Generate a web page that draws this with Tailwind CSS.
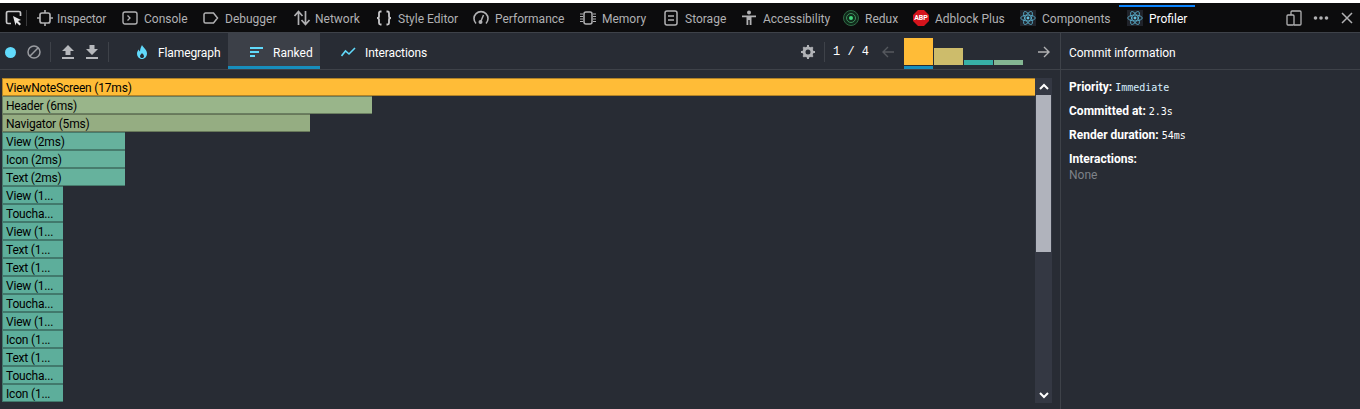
<!doctype html>
<html><head><meta charset="utf-8"><script src="https://cdn.jsdelivr.net/npm/@tailwindcss/browser@4"></script></head>
<body class="m-0 h-[409px] w-[1360px] overflow-hidden bg-[#282c34] font-['Roboto','Open_Sans',sans-serif] text-[12px]">
<div class="h-[3px] bg-white"></div>
<!-- devtools tabs -->
<div class="flex h-[29px] items-center bg-[#0c0c0d] pt-[1px] text-[12px] text-[#b1b1b3] [&>div>span:last-child]:mt-[2px]">
  <div class="flex w-[26px] justify-center pl-[2px]">
    <svg width="18" height="16" viewBox="0 0 18 16" fill="none"><path d="M6 13.500H3a1.500 1.500 0 0 1-1.500-1.500V3A1.500 1.500 0 0 1 3 1.500h11A1.500 1.500 0 0 1 15.500 3v3" stroke="#c8c8ca" stroke-width="1.700"/><path d="M8 6l8 4-3 1 3 3-1.500 1.500-3-3-1 3z" fill="#e4e4e6"/></svg>
  </div>
  <div class="h-[16px] w-px bg-[#3a3a3c]"></div>
  <div class="ml-[10px] flex w-[85px] items-center gap-[4px]"><svg width="16" height="16" viewBox="0 0 16 16" fill="none"><rect x="3" y="3" width="10" height="10" rx="2" stroke="#b1b1b3" stroke-width="1.700"/><path d="M8 0v3M8 13v3M0 8h3M13 8h3" stroke="#b1b1b3" stroke-width="1.600"/></svg><span class="tracking-[-0.1px]">Inspector</span></div>
  <div class="flex w-[81px] items-center gap-[6px]"><svg width="16" height="16" viewBox="0 0 16 16" fill="none"><rect x="1" y="2" width="14" height="12" rx="2" stroke="#b1b1b3" stroke-width="1.400"/><path d="M5.500 5.500L8 8l-2.500 2.500" stroke="#b1b1b3" stroke-width="1.300"/></svg><span>Console</span></div>
  <div class="flex w-[90px] items-center gap-[6px]"><svg width="16" height="16" viewBox="0 0 16 16" fill="none"><path d="M2.500 3h8l4 5-4 5h-8A1.500 1.500 0 0 1 1 11.500v-7A1.500 1.500 0 0 1 2.500 3z" stroke="#b1b1b3" stroke-width="1.500"/></svg><span>Debugger</span></div>
  <div class="flex w-[83px] items-center gap-[4px]"><svg width="18" height="16" viewBox="0 0 18 16" fill="none"><path d="M5.500 15V2M1.500 6l4-4.500 4 4.500M12.500 1v13M8.500 10l4 4.500 4-4.500" stroke="#b1b1b3" stroke-width="1.700"/></svg><span>Network</span></div>
  <div class="flex w-[97px] items-center gap-[6px]"><svg width="16" height="16" viewBox="0 0 16 16" fill="none" stroke="#c8c8ca" stroke-width="1.800"><path d="M5.500 1.500H4.500A1.500 1.500 0 0 0 3 3v3.200C3 7.200 2.300 8 1 8c1.300 0 2 .8 2 1.800V13a1.500 1.500 0 0 0 1.500 1.500h1M10.500 1.500h1A1.500 1.500 0 0 1 13 3v3.200c0 1 .7 1.800 2 1.800-1.300 0-2 .8-2 1.800V13a1.500 1.500 0 0 1-1.500 1.500h-1"/></svg><span>Style Editor</span></div>
  <div class="flex w-[106px] items-center gap-[6px]"><svg width="16" height="16" viewBox="0 0 16 16" fill="none"><path d="M3 13.500A7 7 0 1 1 13 13.500" stroke="#b1b1b3" stroke-width="1.600"/><path d="M10.500 5L8 11" stroke="#b1b1b3" stroke-width="1.500"/><circle cx="7.500" cy="12" r="2" fill="#b1b1b3"/></svg><span>Performance</span></div>
  <div class="flex w-[84px] items-center gap-[5px]"><svg width="18" height="16" viewBox="0 0 18 16" fill="none"><rect x="5" y="2" width="8" height="12" rx="2" stroke="#b1b1b3" stroke-width="1.500"/><path d="M1 4h3M1 6.500h3M1 9h3M1 11.500h3M14 4h3M14 6.500h3M14 9h3M14 11.500h3" stroke="#b1b1b3"/></svg><span>Memory</span></div>
  <div class="flex w-[78px] items-center gap-[6px]"><svg width="16" height="16" viewBox="0 0 16 16" fill="none"><rect x="2" y="1" width="12" height="14" rx="2" stroke="#b1b1b3" stroke-width="1.500"/><path d="M5 6h6M5 10h6" stroke="#b1b1b3" stroke-width="1.400"/></svg><span>Storage</span></div>
  <div class="flex w-[102px] items-center gap-[6px]"><svg width="16" height="16" viewBox="0 0 16 16" fill="#b1b1b3"><circle cx="8" cy="2.500" r="2"/><path d="M1 5.500h14v1.800h-4.500V15H8.700v-5H7.300v5H5.500V7.300H1z"/></svg><span>Accessibility</span></div>
  <div class="flex w-[70px] items-center gap-[6px]"><svg width="16" height="16" viewBox="0 0 16 16" fill="none"><circle cx="8" cy="8" r="7.500" fill="#10291a" stroke="#2f6b46"/><circle cx="8" cy="8" r="4.500" stroke="#3f8f5e"/><circle cx="8" cy="8" r="2" fill="#42d77d"/></svg><span>Redux</span></div>
  <div class="flex w-[107px] items-center gap-[6px]"><div class="relative flex h-[16px] w-[16px] items-center justify-center"><svg class="absolute inset-0" width="16" height="16" viewBox="0 0 16 16"><path d="M5 0h6l5 5v6l-5 5H5l-5-5V5z" fill="#d5141c"/></svg><span class="relative text-[7px] leading-none font-bold text-white">ABP</span></div><span>Adblock Plus</span></div>
  <div class="flex w-[107px] items-center gap-[6px]"><svg width="16" height="16" viewBox="-11 -11 22 22" fill="none" stroke="#61c0e0"><rect x="-11" y="-11" width="22" height="22" fill="#20232a" stroke="none"/><circle r="2" fill="#61c0e0" stroke="none"/><ellipse rx="10" ry="4"/><ellipse rx="10" ry="4" transform="rotate(60)"/><ellipse rx="10" ry="4" transform="rotate(120)"/></svg><span>Components</span></div>
  <div class="relative flex h-full items-center gap-[6px] text-white"><div class="absolute -left-[8px] top-[1px] h-[2px] w-[76px] bg-[#0a84ff]"></div><svg width="16" height="16" viewBox="-11 -11 22 22" fill="none" stroke="#61c0e0"><rect x="-11" y="-11" width="22" height="22" fill="#20232a" stroke="none"/><circle r="2" fill="#61c0e0" stroke="none"/><ellipse rx="10" ry="4"/><ellipse rx="10" ry="4" transform="rotate(60)"/><ellipse rx="10" ry="4" transform="rotate(120)"/></svg><span>Profiler</span></div>
  <div class="ml-auto flex items-center pr-[7px]">
    <svg width="16" height="16" viewBox="0 0 16 16" fill="none" stroke="#b1b1b3" stroke-width="1.300"><rect x="1" y="5" width="7" height="10" rx="1"/><path d="M5 5V2a1 1 0 0 1 1-1h8a1 1 0 0 1 1 1v12a1 1 0 0 1-1 1H8"/></svg>
    <svg class="ml-[11px]" width="16" height="16" viewBox="0 0 16 16" fill="#b1b1b3"><circle cx="2.500" cy="8" r="1.800"/><circle cx="8" cy="8" r="1.800"/><circle cx="13.500" cy="8" r="1.800"/></svg>
    <svg class="ml-[12px]" width="12" height="12" viewBox="0 0 12 12" fill="none" stroke="#b1b1b3" stroke-width="1.500"><path d="M1 1l10 10M11 1L1 11"/></svg>
  </div>
</div>
<!-- main -->
<div class="flex h-[377px] border-t border-[#3e4249]">
  <div class="flex w-[1061px] flex-col border-r border-[#3e4249]">
    <div class="flex h-[37px] shrink-0 items-center border-b border-[#3e4249] text-white">
      <div class="flex h-full items-center pt-[2px]">
        <span class="ml-[5px] h-[11px] w-[11px] rounded-full bg-[#61dafb]"></span>
        <svg class="ml-[11px]" width="14" height="14" viewBox="0 0 14 14" fill="none" stroke="#9a9ca1" stroke-width="1.500"><circle cx="7" cy="7" r="6"/><path d="M2.800 11.200L11.200 2.800"/></svg>
        <div class="ml-[9px] h-[20px] w-px bg-[#3e4249]"></div>
        <svg class="ml-[10px]" width="14" height="14" viewBox="0 0 14 14" fill="#b6b8bc"><path d="M7 0l6 6H9.500v4h-5V6H1zM1 12h12v2H1z"/></svg>
        <svg class="ml-[10px]" width="14" height="14" viewBox="0 0 14 14" fill="#b6b8bc"><path d="M4.500 0h5v4H13L7 10 1 4h3.500zM1 12h12v2H1z"/></svg>
        <div class="ml-[9px] h-[20px] w-px bg-[#3e4249]"></div>
        <div class="ml-[27px] flex w-[92px] items-center gap-[10px]"><svg width="12" height="14" viewBox="0 0 12 14" fill="#61dafb"><path d="M6 0c1 2.500 5 4.500 5 8.500C11 11.500 8.800 14 6 14s-5-2.500-5-5.500c0-2 1-3 1.800-4 .2 1 .6 1.600 1.200 2C4 4 5 2 6 0z"/><path d="M6 8c.5 1 2 1.600 2 3.200C8 12.400 7 13 6 13s-2-.7-2-1.800C4 9.800 5.500 9 6 8z" fill="#282c34"/></svg><span class="mt-[2px] tracking-[-0.1px]">Flamegraph</span></div>
      </div>
      <div class="relative flex h-full w-[92px] items-center gap-[9px] bg-[#3c4048] pt-[2px] pl-[22px]"><svg width="14" height="12" viewBox="0 0 14 12" fill="#61dafb"><path d="M0 1h13v2H0zM0 5h9v2H0zM0 9h5v2H0z"/></svg><span class="mt-[2px]">Ranked</span><div class="absolute inset-x-0 bottom-0 h-[3px] bg-[#178ebd]"></div></div>
      <div class="ml-[21px] flex items-center gap-[9px] pt-[2px]"><svg width="15" height="12" viewBox="0 0 15 12" fill="none" stroke="#61dafb" stroke-width="1.600"><path d="M0.500 10l4-5 3.500 3 6-6"/></svg><span class="mt-[2px] tracking-[-0.1px]">Interactions</span></div>
      <div class="ml-auto flex h-full items-center">
        <svg class="mt-[2px]" width="14" height="14" viewBox="0 0 14 14"><circle cx="7" cy="7" r="4" fill="none" stroke="#b0b2b6" stroke-width="3"/><path d="M6 0h2v3H6zM6 11h2v3H6zM0 6h3v2H0zM11 6h3v2h-3zM1.500 3L3 1.500 5 3.500 3.500 5zM9 10.500l1.500-1.500 2 2L11 12.500zM1.500 11L3.500 9 5 10.500 3 12.500zM9 3.500L11 1.500 12.500 3l-2 2z" fill="#b0b2b6"/></svg>
        <div class="mt-[2px] ml-[9px] h-[20px] w-px bg-[#3e4249]"></div>
        <span class="mt-[2px] ml-[8px] font-['Liberation_Mono',monospace] text-[12px] whitespace-pre">1 / 4</span>
        <svg class="mt-[2px] ml-[13px]" width="12" height="12" viewBox="0 0 12 12" fill="none" stroke="#55585e" stroke-width="1.400"><path d="M12 6H1M6 1L1 6l5 5"/></svg>
        <div class="ml-[10px] flex h-full w-[120px] gap-px">
          <div class="flex h-full w-[29px] flex-col justify-end"><div class="h-[27px] bg-[#ffbc37]"></div><div class="mt-[1px] h-[3px] bg-[#178ebd]"></div></div>
          <div class="mt-[15px] h-[17px] w-[29px] bg-[#cdbc6b]"></div>
          <div class="mt-[27px] h-[5px] w-[29px] bg-[#37b0a6]"></div>
          <div class="mt-[27px] h-[5px] w-[29px] bg-[#84b792]"></div>
        </div>
        <svg class="mt-[2px] ml-[14px] mr-[10px]" width="12" height="12" viewBox="0 0 12 12" fill="none" stroke="#b1b1b3" stroke-width="1.400"><path d="M0 6h11M6 1l5 5-5 5"/></svg>
      </div>
    </div>
    <div class="relative flex min-h-0 flex-1 pt-[8px] pl-[2px] text-[12px] leading-[18px] tracking-[-0.2px] text-black">
      <div class="flex w-[1033px] flex-col">
        <div class="h-[18px] w-full overflow-hidden border-y border-l border-black/30 bg-[#ffbc37] pl-[3px]">ViewNoteScreen (17ms)</div>
        <div class="h-[18px] w-[370px] overflow-hidden border-y border-l border-black/30 bg-[#99b58a] pl-[3px]">Header (6ms)</div>
        <div class="h-[18px] w-[308px] overflow-hidden border-y border-l border-black/30 bg-[#95ad82] pl-[3px]">Navigator (5ms)</div>
        <div class="h-[18px] w-[123px] overflow-hidden border-y border-l border-black/30 bg-[#66b29d] pl-[3px]">View (2ms)</div>
        <div class="h-[18px] w-[123px] overflow-hidden border-y border-l border-black/30 bg-[#66b29d] pl-[3px]">Icon (2ms)</div>
        <div class="h-[18px] w-[123px] overflow-hidden border-y border-l border-black/30 bg-[#66b29d] pl-[3px]">Text (2ms)</div>
        <div class="h-[18px] w-[61px] overflow-hidden border-y border-l border-black/30 bg-[#5dae9b] pl-[3px]">View (1...</div>
        <div class="h-[18px] w-[61px] overflow-hidden border-y border-l border-black/30 bg-[#5dae9b] pl-[3px]">Toucha...</div>
        <div class="h-[18px] w-[61px] overflow-hidden border-y border-l border-black/30 bg-[#5dae9b] pl-[3px]">View (1...</div>
        <div class="h-[18px] w-[61px] overflow-hidden border-y border-l border-black/30 bg-[#5dae9b] pl-[3px]">Text (1...</div>
        <div class="h-[18px] w-[61px] overflow-hidden border-y border-l border-black/30 bg-[#5dae9b] pl-[3px]">Text (1...</div>
        <div class="h-[18px] w-[61px] overflow-hidden border-y border-l border-black/30 bg-[#5dae9b] pl-[3px]">View (1...</div>
        <div class="h-[18px] w-[61px] overflow-hidden border-y border-l border-black/30 bg-[#5dae9b] pl-[3px]">Toucha...</div>
        <div class="h-[18px] w-[61px] overflow-hidden border-y border-l border-black/30 bg-[#5dae9b] pl-[3px]">View (1...</div>
        <div class="h-[18px] w-[61px] overflow-hidden border-y border-l border-black/30 bg-[#5dae9b] pl-[3px]">Icon (1...</div>
        <div class="h-[18px] w-[61px] overflow-hidden border-y border-l border-black/30 bg-[#5dae9b] pl-[3px]">Text (1...</div>
        <div class="h-[18px] w-[61px] overflow-hidden border-y border-l border-black/30 bg-[#5dae9b] pl-[3px]">Toucha...</div>
        <div class="h-[18px] w-[61px] overflow-hidden border-y border-l border-black/30 bg-[#5dae9b] pl-[3px]">Icon (1...</div>
      </div>
      <div class="flex h-[325px] w-[17px] flex-col items-center bg-[#343843]">
        <div class="flex h-[17px] w-full items-center justify-center"><svg width="10" height="8" viewBox="0 0 10 8" fill="none" stroke="#fff" stroke-width="2"><path d="M1 6l4-4 4 4"/></svg></div>
        <div class="h-[157px] w-[15px] bg-[#b0b3bc]"></div>
        <div class="flex-1"></div>
        <div class="flex h-[17px] w-full items-center justify-center"><svg width="10" height="8" viewBox="0 0 10 8" fill="none" stroke="#fff" stroke-width="2"><path d="M1 2l4 4 4-4"/></svg></div>
      </div>
    </div>
  </div>
  <div class="flex-1 text-white">
    <div class="flex h-[37px] items-center border-b border-[#3e4249] pt-[2px] pl-[8px]"><span class="mt-[2px] tracking-[-0.05px]">Commit information</span></div>
    <div class="flex flex-col pt-[9px] pl-[8px] leading-[16px]">
      <div class="h-[24px]"><span class="font-bold">Priority:</span> <span class="font-['DejaVu_Sans_Mono',monospace] text-[10px] text-[#d8f0ff]">Immediate</span></div>
      <div class="h-[24px]"><span class="font-bold">Committed at:</span> <span class="font-['DejaVu_Sans_Mono',monospace] text-[10px]">2.3s</span></div>
      <div class="h-[24px]"><span class="font-bold">Render duration:</span> <span class="font-['DejaVu_Sans_Mono',monospace] text-[10px]">54ms</span></div>
      <div class="font-bold">Interactions:</div>
      <div class="text-[#7d8288]">None</div>
    </div>
  </div>
</div>
</body></html>
